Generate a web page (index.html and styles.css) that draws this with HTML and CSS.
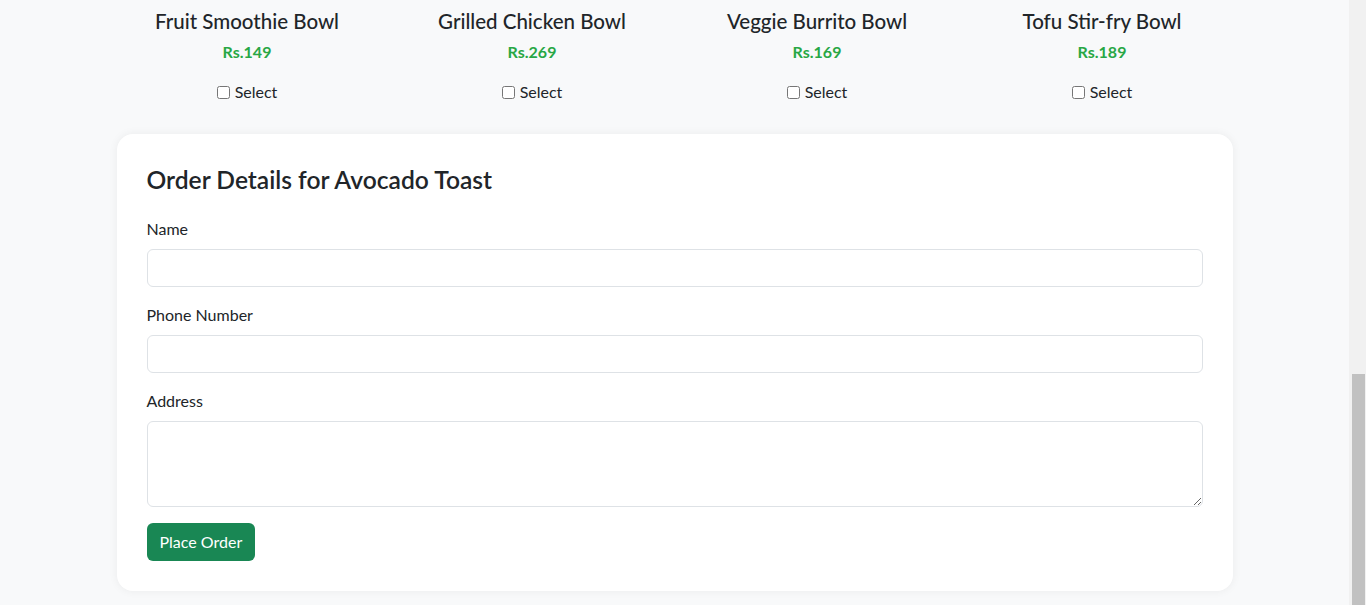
FILE: index.html
```html
<!DOCTYPE html>
<html lang="en">
<head>
<meta charset="utf-8">
<title>Order</title>
<link rel="stylesheet" href="styles.css">
</head>
<body>
<div class="viewport">
  <main class="page">
    <div class="container">
      <div class="menu-row">
        <div class="item">
          <h5 class="item-name">Fruit Smoothie Bowl</h5>
          <p class="item-price">Rs.149</p>
          <label class="select"><input type="checkbox"> Select</label>
        </div>
        <div class="item">
          <h5 class="item-name">Grilled Chicken Bowl</h5>
          <p class="item-price">Rs.269</p>
          <label class="select"><input type="checkbox"> Select</label>
        </div>
        <div class="item">
          <h5 class="item-name">Veggie Burrito Bowl</h5>
          <p class="item-price">Rs.169</p>
          <label class="select"><input type="checkbox"> Select</label>
        </div>
        <div class="item">
          <h5 class="item-name">Tofu Stir-fry Bowl</h5>
          <p class="item-price">Rs.189</p>
          <label class="select"><input type="checkbox"> Select</label>
        </div>
      </div>

      <section class="order-card">
        <h3 class="order-title">Order Details for Avocado Toast</h3>
        <form class="order-form">
          <div class="field">
            <label class="field-label" for="name">Name</label>
            <input class="control" id="name" type="text">
          </div>
          <div class="field">
            <label class="field-label" for="phone">Phone Number</label>
            <input class="control" id="phone" type="text">
          </div>
          <div class="field">
            <label class="field-label" for="addr">Address</label>
            <textarea class="control area" id="addr" rows="3"></textarea>
          </div>
          <button type="button" class="btn-order">Place Order</button>
        </form>
      </section>
    </div>
  </main>
  <div class="scrollbar"><div class="scroll-thumb"></div></div>
</div>
</body>
</html>
```
FILE: styles.css
```css
html, body {
  margin: 0;
  height: 100%;
  overflow: hidden;
}
body {
  background: #f8f9fa;
  color: #212529;
  font-family: Lato, "Open Sans", sans-serif;
  font-size: 16px;
  line-height: 24px;
}
.viewport {
  display: flex;
  height: 605px;
}
.page {
  flex: 1;
  min-width: 0;
}
.container {
  width: 1116px;
  margin: 0 auto;
  padding-top: 9px;
}
.menu-row {
  display: grid;
  grid-template-columns: repeat(4, 285px);
  margin: 0 -12px;
}
.item {
  text-align: center;
}
.item-name {
  margin: 0 0 7px;
  font-size: 20.5px;
  line-height: 24px;
  font-weight: 500;
  color: #212529;
}
.item-price {
  margin: 0 0 16px;
  font-weight: 700;
  color: #28a745;
  font-size: 16px;
  line-height: 24px;
}
.select {
  display: flex;
  justify-content: center;
  align-items: center;
  gap: 5px;
  height: 24px;
  font-size: 16px;
}
.select input {
  margin: 0;
  width: 13px;
  height: 13px;
}
.order-card {
  margin-top: 30px;
  background: #fff;
  border-radius: 16px;
  box-shadow: 0 0 10px rgba(0,0,0,0.06);
  padding: 30px;
}
.order-title {
  margin: 0 0 21px;
  font-size: 24.6px;
  line-height: 32px;
  font-weight: 600;
}
.field {
  margin-bottom: 16px;
}
.field-label {
  display: block;
  margin-bottom: 8px;
}
.control {
  display: block;
  box-sizing: border-box;
  width: 100%;
  height: 38px;
  border: 1px solid #dee2e6;
  border-radius: 6px;
  background: #fff;
  font: inherit;
  padding: 6px 12px;
}
.area {
  height: 86px;
  resize: vertical;
}
.btn-order {
  display: block;
  height: 38px;
  padding: 0 13px;
  background: #198754;
  color: #fff;
  border: 0;
  border-radius: 6px;
  font: inherit;
  font-size: 16px;
}
.scrollbar {
  width: 17px;
  background: #f1f1f1;
  display: flex;
  flex-direction: column;
  justify-content: flex-end;
  align-items: center;
}
.scroll-thumb {
  width: 13px;
  height: 231px;
  background: #c1c1c1;
  margin-left: 1px;
}
```
